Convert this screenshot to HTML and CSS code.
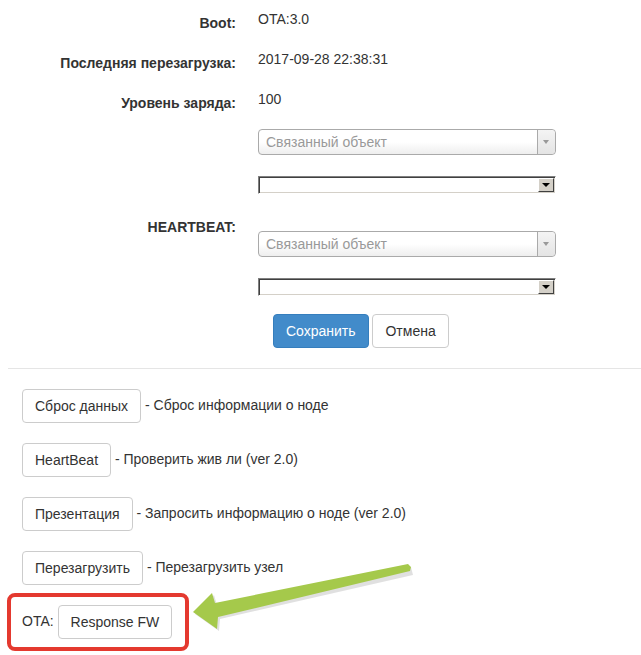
FILE: index.html
```html
<!DOCTYPE html>
<html lang="ru">
<head>
  <meta charset="UTF-8">
  <meta name="viewport" content="width=device-width, initial-scale=1.0">
  <title>Нода</title>
  <link rel="stylesheet" href="styles.css">
</head>
<body>
  <form class="node-form">
    <div class="form-row info">
      <label class="control-label">Boot:</label>
      <div class="control-value">OTA:3.0</div>
    </div>
    <div class="form-row info">
      <label class="control-label">Последняя перезагрузка:</label>
      <div class="control-value">2017-09-28 22:38:31</div>
    </div>
    <div class="form-row info">
      <label class="control-label">Уровень заряда:</label>
      <div class="control-value">100</div>
    </div>

    <div class="form-row group-first">
      <label class="control-label"></label>
      <div class="control-value">
        <div class="select2">
          <span class="select2-text">Связанный объект</span>
          <span class="select2-arrow"></span>
        </div>
        <div class="old-select"><span class="old-select-btn"></span></div>
      </div>
    </div>

    <div class="form-row group-hb">
      <label class="control-label hb-label">HEARTBEAT:</label>
      <div class="control-value">
        <div class="select2">
          <span class="select2-text">Связанный объект</span>
          <span class="select2-arrow"></span>
        </div>
        <div class="old-select"><span class="old-select-btn"></span></div>
      </div>
    </div>

    <div class="form-row form-buttons">
      <div class="control-label"></div>
      <div class="control-value buttons">
        <button type="button" class="btn btn-primary">Сохранить</button>
        <button type="button" class="btn">Отмена</button>
      </div>
    </div>
  </form>

  <hr class="divider">

  <div class="actions">
    <div class="action-row">
      <button type="button" class="btn">Сброс данных</button> - Сброс информации о ноде
    </div>
    <div class="action-row">
      <button type="button" class="btn">HeartBeat</button> - Проверить жив ли (ver 2.0)
    </div>
    <div class="action-row">
      <button type="button" class="btn">Презентация</button> - Запросить информацию о ноде (ver 2.0)
    </div>
    <div class="action-row">
      <button type="button" class="btn">Перезагрузить</button> - Перезагрузить узел
    </div>
    <div class="ota-box">
      OTA: <button type="button" class="btn">Response FW</button>
    </div>
  </div>

  <!-- annotation arrow -->
  <svg class="annotation" width="641" height="655" viewBox="0 0 641 655">
    <polygon class="arrow-shadow" points="195,614 214,595 217,605 411,567 413,575 220,619 219,631"/>
    <polygon class="arrow" points="193,612 212,593 215,603 408,564 411,567 410,571 218,617 217,629"/>
  </svg>
</body>
</html>
```

FILE: styles.css
```css
* {
  box-sizing: border-box;
}
body {
  margin: 0;
  font-family: "Liberation Sans", Arial, sans-serif;
  font-size: 14px;
  line-height: 20px;
  color: #333;
  background-color: #fff;
}

/* верхняя форма */
.node-form {
  padding-top: 9px;
}
.form-row {
  display: flex;
  align-items: flex-start;
}
.control-label {
  flex: none;
  width: 236px;
  text-align: right;
  font-weight: bold;
}
.control-value {
  margin-left: 22px;
}
.info {
  margin-bottom: 16px;
}
.info .control-label {
  padding-top: 4px;
}
.group-hb {
  margin-top: 23px;
}
.group-hb .control-value {
  padding-top: 14px;
}
.form-buttons {
  margin-top: 18px;
}
.buttons {
  padding-left: 15px;
}

/* select2 */
.select2 {
  display: flex;
  width: 298px;
  height: 26px;
  border: 1px solid #aaa;
  border-radius: 4px;
  background: linear-gradient(#fff 0%, #fff 50%, #eee 100%);
}
.select2-text {
  flex: 1;
  padding-left: 7px;
  line-height: 24px;
  color: #999;
}
.select2-arrow {
  position: relative;
  width: 18px;
  border-left: 1px solid #aaa;
  border-radius: 0 4px 4px 0;
  background: linear-gradient(#f4f4f4, #e4e4e4);
}
.select2-arrow::after {
  content: '';
  position: absolute;
  left: 5px;
  top: 10px;
  border-left: 3px solid transparent;
  border-right: 3px solid transparent;
  border-top: 4px solid #999;
}

/* старый нативный select */
.old-select {
  display: flex;
  justify-content: flex-end;
  width: 298px;
  height: 18px;
  margin-top: 21px;
  padding: 1px;
  border: 1px solid;
  border-color: #808080 #fff #fff #808080;
  box-shadow: inset 1px 1px 0 #404040, inset -1px -1px 0 #d4d0c8;
  background: #fff;
}
.old-select-btn {
  position: relative;
  width: 16px;
  height: 14px;
  background: #d4d0c8;
  border: 1px solid;
  border-color: #fff #404040 #404040 #fff;
}
.old-select-btn::after {
  content: '';
  position: absolute;
  left: 3px;
  top: 4px;
  border-left: 4px solid transparent;
  border-right: 4px solid transparent;
  border-top: 4px solid #000;
}

/* кнопки */
.btn {
  display: inline-block;
  vertical-align: middle;
  margin: 0;
  padding: 6px 12px;
  font-family: inherit;
  font-size: 14px;
  line-height: 20px;
  color: #333;
  background: #fff;
  border: 1px solid #ccc;
  border-radius: 4px;
}
.btn-primary {
  color: #fff;
  background: #428bca;
  border-color: #357ebd;
}

.divider {
  margin: 20px 0 0 8px;
  border: 0;
  border-top: 1px solid #e5e5e5;
}

/* действия */
.actions {
  padding: 20px 0 0 22px;
}
.action-row + .action-row {
  margin-top: 20px;
}
.ota-box {
  display: inline-block;
  margin: 8px 0 0 -15px;
  padding: 8px 13px 8px 11px;
  border: 4px solid #e4392f;
  border-radius: 8px;
}

.annotation {
  position: absolute;
  left: 0;
  top: 0;
  pointer-events: none;
}
.arrow {
  fill: #a5c94b;
}
.arrow-shadow {
  fill: rgba(0, 0, 0, 0.12);
}
```
